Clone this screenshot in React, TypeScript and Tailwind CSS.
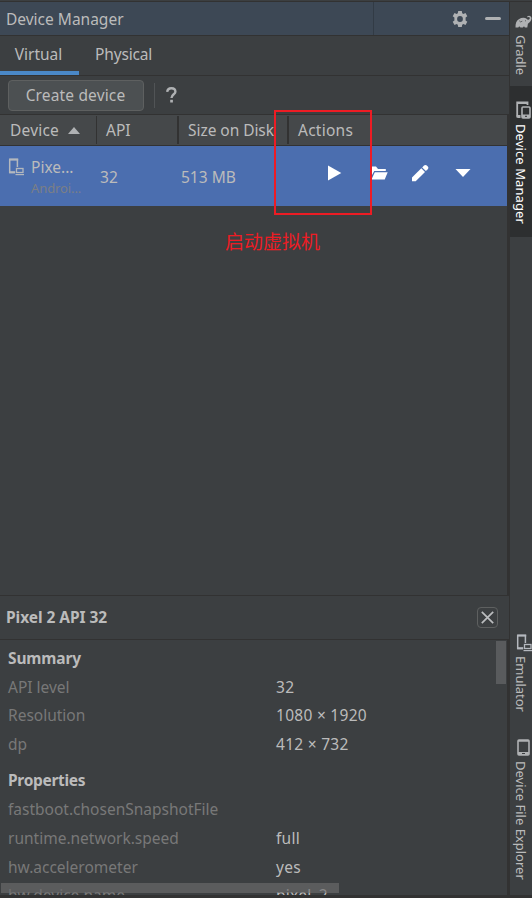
import type { ReactNode } from "react";

function Gear() {
  return (
    <svg width="16" height="16" viewBox="0 0 16 16" fill="#afb1b3">
      <path
        fillRule="evenodd"
        d="M6.200 0h3.600l.4 2.200 1.200.7 2.100-.8 1.800 3.100-1.700 1.400v2.800l1.700 1.400-1.800 3.100-2.100-.8-1.200.7-.4 2.200H6.200l-.4-2.200-1.200-.7-2.100.8-1.800-3.100 1.700-1.400V6.600L.7 5.200l1.800-3.100 2.100.8 1.200-.7zM8 5.100a2.900 2.900 0 1 0 0 5.800 2.900 2.900 0 0 0 0-5.800z"
      />
    </svg>
  );
}

function Elephant() {
  return (
    <svg width="17" height="13" viewBox="0 0 17 13" fill="#afb1b3">
      <path d="M0.500 12.500C0.300 8.500 1.500 5.300 3.800 4.200C6.500 2.600 9.800 2.400 11.600 3.800C12.300 4.800 13.800 5 14.500 4.100C15.100 3.200 14.700 1.900 13.700 2L12.600 2.500L12.100 1.400C13.700 0 16.500 0.600 16.500 3.200C16.500 5.800 14.500 7.700 12.900 8.700L12.300 12.500H9.800C9.800 11 8.200 11 8 12.500H5.300C5.200 11 3.600 11 3.400 12.500Z" />
      <path d="M4.300 5.800q1 2 3 .4M10 5.800h1" stroke="#3c3f41" strokeWidth=".7" fill="none" />
    </svg>
  );
}

function Devices() {
  return (
    <svg width="15" height="18" viewBox="0 0 15 18" fill="none">
      <path d="M4 15.500H1.200V1.500H11.500V4" stroke="#afb1b3" strokeWidth="1.800" />
      <path d="M0.500 14h4v3h-3zM1 1h11v2H1z" fill="#afb1b3" />
      <rect x="6" y="6" width="8" height="11" rx="1" stroke="#afb1b3" strokeWidth="1.600" />
      <path d="M6 13.500h8v3.500H6z" fill="#afb1b3" />
      <path d="M9 15.300h2" stroke="#2d2f30" />
    </svg>
  );
}

function VirtualDevice() {
  return (
    <svg width="16" height="18" viewBox="0 0 16 18" fill="none" stroke="#b4b8be">
      <path d="M7 14.500H1.700V1.500H9.400V9" strokeWidth="1.500" />
      <path d="M1.200 1.600h9M1.200 14.200h6" strokeWidth="2" />
      <rect x="8.500" y="10.500" width="6.500" height="4" strokeWidth="1.300" />
      <path d="M7.500 16.600h8.500" strokeWidth="1.200" />
    </svg>
  );
}

function Phone() {
  return (
    <svg width="13" height="17" viewBox="0 0 13 17" fill="none">
      <rect x="1" y="1" width="11" height="15" rx="1" stroke="#afb1b3" strokeWidth="1.600" />
      <path d="M1 1h11v1.800H1zM1 13h11v3H1z" fill="#afb1b3" />
      <path d="M5 14.500h3" stroke="#3c3f41" />
    </svg>
  );
}

function HeadCell({ className, children }: { className: string; children: ReactNode }) {
  return <div className={`flex h-[28px] items-center border-[#323232] whitespace-nowrap ${className}`}>{children}</div>;
}

function Prop({ name, value, className = "h-[29px]" }: { name: string; value?: string; className?: string }) {
  return (
    <div className={`flex shrink-0 items-center ${className}`}>
      <span className="w-[268px] text-[#787878]">{name}</span>
      <span className="tracking-[0.28px]">{value}</span>
    </div>
  );
}

function SideLabel({ children, className }: { children: ReactNode; className: string }) {
  return (
    <span className={`w-[22px] text-[13px] leading-[22px] whitespace-nowrap [writing-mode:vertical-rl] ${className}`}>
      {children}
    </span>
  );
}

export default function App() {
  return (
    <div className="relative flex h-[898px] w-[532px] flex-col overflow-hidden bg-[#3c3f41] font-['Noto_Sans','Noto_Sans_CJK_SC',sans-serif] text-[15.5px] leading-[22px] text-[#bbbbbb]">
      <div className="h-[2px] shrink-0 border-b border-[#323232]" />
      <div className="flex h-[893px] shrink-0">
        <main className="flex w-[510px] shrink-0 flex-col border-r border-[#323232]">
          <header className="flex h-[34px] shrink-0 border-b border-[#323232] bg-[#3d4855]">
            <h1 className="flex w-[374px] items-center border-r border-[#323b45] pl-[6px]">Device Manager</h1>
            <div className="flex flex-1 items-center justify-end gap-[17px] pr-[8px]">
              <Gear />
              <span className="h-[3px] w-[16px] rounded-full bg-[#afb1b3]" />
            </div>
          </header>

          <nav className="flex h-[40px] shrink-0 border-b border-[#323232]">
            <span className="flex w-[79px] items-center justify-center border-b-4 border-[#4a88c7] pr-[2px]">Virtual</span>
            <span className="flex items-center pb-[4px] pl-[16px] tracking-[-0.15px]">Physical</span>
          </nav>

          <div className="flex h-[39px] shrink-0 items-center border-b border-[#323232] pl-[8px]">
            <button className="h-[31px] w-[136px] rounded-[4px] border border-[#5e6060] bg-[#4c5052] pr-px leading-[28px] tracking-[0.15px]">Create device</button>
            <span className="ml-[10px] h-[25px] w-px bg-[#515456]" />
            <svg className="ml-[11px]" width="12" height="16" viewBox="0 0 12 16" fill="none">
              <path d="M1.200 4.800C1.400 2.400 3.200 1.200 5.400 1.200S9.400 2.500 9.400 4.700C9.400 7.300 5.500 7.300 5.500 11" stroke="#afb1b3" strokeWidth="2.400" />
              <rect x="4.200" y="12.800" width="2.700" height="2.700" fill="#afb1b3" />
            </svg>
          </div>

          <div className="flex h-[481px] shrink-0 flex-col border-r-2 border-b border-r-[#323232] border-b-[#323232]">
            <div className="flex h-[31px] shrink-0 items-center border-b border-[#323232] bg-[#45484a]">
              <HeadCell className="w-[97px] border-r pl-[10px] tracking-[0.2px]">
                Device
                <svg className="ml-[9px]" width="12" height="7" viewBox="0 0 12 7">
                  <path d="M0 7 6 0l6 7z" fill="#afb1b3" />
                </svg>
              </HeadCell>
              <HeadCell className="w-[82px] border-r-2 pl-[9px]">API</HeadCell>
              <HeadCell className="w-[110px] border-r-2 pl-[9px] tracking-[-0.05px]">Size on Disk</HeadCell>
              <HeadCell className="pl-[9px] tracking-[0.25px]">Actions</HeadCell>
            </div>
            <div className="flex h-[60px] shrink-0 bg-[#4b6eaf]">
              <div className="flex w-[100px] pt-[12px] pl-[8px]">
                <VirtualDevice />
                <div className="-mt-[2px] ml-[7px]">
                  <div className="h-[21px]">Pixe...</div>
                  <div className="text-[13px] leading-[22px] tracking-[-0.1px] text-[#7b7f86]">Androi...</div>
                </div>
              </div>
              <span className="w-[81px] pt-[20px] tracking-[0.2px]">32</span>
              <span className="w-[147px] pt-[20px]">513 MB</span>
              <div className="flex pt-[18px]">
                <svg width="14" height="17" viewBox="0 0 14 17">
                  <path d="M0 1.500v15l13.300-7.500z" fill="white" />
                </svg>
                <svg className="ml-[28px]" width="18" height="17" viewBox="0 0 18 17" fill="white">
                  <path d="M1 2.500h5l2 2.500h7.800v2H4.200L1.500 12z" />
                  <path d="M4.800 8.300H17.700l-3 7.200H1.500z" />
                </svg>
                <svg className="ml-[23px]" width="18" height="18" viewBox="0 0 18 18" fill="white">
                  <path d="M1 13.500 10.300 4.300l3.700 3.700L4.700 17.300H1z" />
                  <path d="M11.200 3.400 13 1.600c.9-.9 2-.9 2.800-.1l1 1c.8.8.8 1.800 0 2.700l-1.900 1.900z" />
                </svg>
                <svg className="mt-[4px] ml-[26px]" width="16" height="9" viewBox="0 0 16 9">
                  <path d="M.5.900h15L8 8.900z" fill="white" />
                </svg>
              </div>
            </div>
          </div>

          <div className="flex h-[44px] shrink-0 items-center justify-between border-b border-[#323232] pr-[11px] pl-[6px] font-bold">
            <h2 className="-mt-[2px] tracking-[-0.05px]">Pixel 2 API 32</h2>
            <span className="flex size-[21px] items-center justify-center rounded-[4px] border border-[#5e6060]">
              <svg width="13" height="13" viewBox="0 0 13 13">
                <path d="m.8.8 11.400 11.400M12.200.8.8 12.200" stroke="#bbbdbf" strokeWidth="1.700" />
              </svg>
            </span>
          </div>

          <section className="relative flex h-[255px] shrink-0 flex-col overflow-hidden border-r-2 border-[#323232] pt-[3px] pl-[8px]">
            <h3 className="flex h-[29px] shrink-0 items-center font-bold tracking-[-0.15px]">Summary</h3>
            <Prop name="API level" value="32" />
            <Prop name="Resolution" value="1080 × 1920" className="h-[28px]" />
            <Prop name="dp" value="412 × 732" />
            <h3 className="mt-[7px] flex h-[29px] shrink-0 items-center font-bold tracking-[-0.3px]">Properties</h3>
            <Prop name="fastboot.chosenSnapshotFile" />
            <Prop name="runtime.network.speed" value="full" />
            <Prop name="hw.accelerometer" value="yes" />
            <Prop name="hw.device.name" value="pixel_2" className="h-[28px]" />
            <span className="absolute top-px right-[1px] h-[43px] w-[10px] bg-[#595b5d]" />
            <span className="absolute bottom-[2px] left-px h-[10px] w-[338px] bg-[#6b6c6d]/65" />
          </section>
        </main>

        <aside className="flex w-[22px] shrink-0 flex-col">
          <div className="flex h-[84px] shrink-0 flex-col items-end pt-[13px]">
            <Elephant />
            <SideLabel className="mt-[7px] tracking-[-0.1px]">Gradle</SideLabel>
          </div>
          <div className="flex h-[151px] shrink-0 flex-col bg-[#2d2f30] pt-[15px]">
            <span className="ml-[6px]"><Devices /></span>
            <SideLabel className="mt-[5px] tracking-[0.1px] text-white">Device Manager</SideLabel>
          </div>
          <div className="flex flex-1 flex-col pt-[397px]">
            <span className="ml-[6px]"><VirtualDevice /></span>
            <SideLabel className="mt-[4px] h-[83px]">Emulator</SideLabel>
            <span className="ml-[7px]"><Phone /></span>
            <SideLabel className="mt-[5px]">Device File Explorer</SideLabel>
          </div>
        </aside>
      </div>
      <div className="h-[3px] shrink-0 bg-[#323232]" />

      <div className="absolute top-[110px] left-[274px] h-[105px] w-[98px] border-2 border-[#ed1c24]" />
      <div className="absolute top-[228px] left-[225px] text-[19px] leading-[28px] whitespace-nowrap text-[#ed1c24]">启动虚拟机</div>
    </div>
  );
}
